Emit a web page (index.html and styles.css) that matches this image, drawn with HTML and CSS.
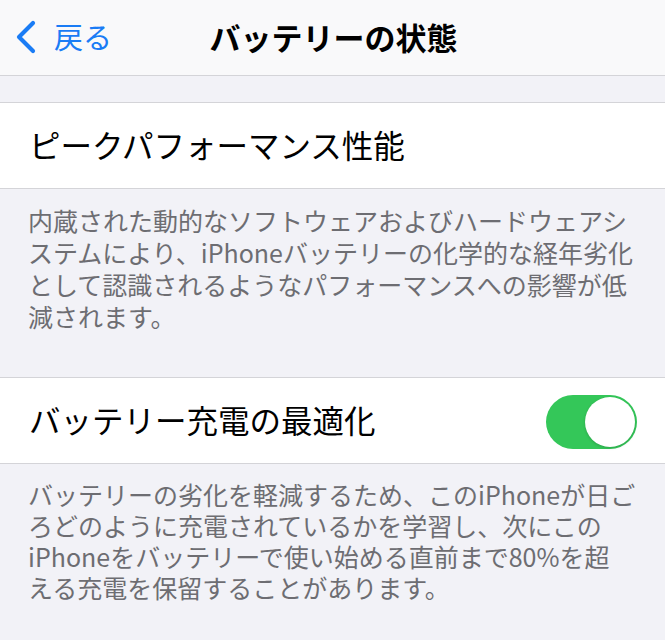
FILE: index.html
```html
<!DOCTYPE html>
<html lang="ja">
<head>
<meta charset="utf-8">
<link rel="stylesheet" href="styles.css">
</head>
<body>
<div class="page">
  <header class="nav">
    <div class="back">
      <svg class="chevron" width="24" height="34" viewBox="0 0 24 34">
        <path d="M19 3 L5 17 L19 31" fill="none" stroke="#1a7cf5" stroke-width="4.2" stroke-linecap="round" stroke-linejoin="round"/>
      </svg>
      <span class="back-text">戻る</span>
    </div>
    <div class="title">バッテリーの状態</div>
  </header>
  <div class="spacer"></div>
  <div class="row">
    <span class="row-label">ピークパフォーマンス性能</span>
  </div>
  <div class="footer footer-first">
    <div class="line">内蔵された動的なソフトウェアおよびハードウェアシ</div>
    <div class="line">ステムにより、iPhoneバッテリーの化学的な経年劣化</div>
    <div class="line">として認識されるようなパフォーマンスへの影響が低</div>
    <div class="line">減されます。</div>
  </div>
  <div class="row">
    <span class="row-label">バッテリー充電の最適化</span>
    <div class="toggle"><div class="knob"></div></div>
  </div>
  <div class="footer footer-second">
    <div class="line">バッテリーの劣化を軽減するため、このiPhoneが日ご</div>
    <div class="line">ろどのように充電されているかを学習し、次にこの</div>
    <div class="line">iPhoneをバッテリーで使い始める直前まで80%を超</div>
    <div class="line">える充電を保留することがあります。</div>
  </div>
</div>
</body>
</html>
```
FILE: styles.css
```css
* { box-sizing: border-box; }
html, body {
  margin: 0;
  padding: 0;
  background: #f2f2f7;
}
body {
  width: 665px;
  height: 640px;
  overflow: hidden;
  font-family: "Noto Sans CJK JP", "Noto Sans", sans-serif;
}
.page {
  display: flex;
  flex-direction: column;
}
.nav {
  height: 76px;
  background: #f9f9fa;
  border-bottom: 1px solid #d4d4d8;
  position: relative;
  display: flex;
  align-items: center;
  justify-content: center;
}
.back {
  position: absolute;
  left: 14px;
  top: 20px;
  display: flex;
  align-items: center;
  gap: 16px;
}
.chevron { display: block; }
.back-text {
  color: #1a7cf5;
  font-size: 29px;
  line-height: 34px;
  margin-top: -3px;
}
.title {
  font-size: 31px;
  font-weight: 700;
  color: #000;
  line-height: 40px;
  margin-top: -2px;
  margin-left: 2px;
}
.spacer {
  height: 26px;
}
.row {
  height: 87px;
  background: #fff;
  border-top: 1px solid #d4d4d8;
  border-bottom: 1px solid #d4d4d8;
  display: flex;
  align-items: center;
  justify-content: space-between;
  padding: 0 28px 0 29px;
}
.row-label {
  font-size: 31.5px;
  color: #000;
  line-height: 40px;
  margin-top: -3px;
}
.toggle {
  width: 91px;
  height: 54px;
  border-radius: 27px;
  background: #34c759;
  display: flex;
  justify-content: flex-end;
  align-items: center;
  padding: 2px;
  margin-top: 2px;
}
.knob {
  width: 50px;
  height: 50px;
  border-radius: 50%;
  background: #fff;
  box-shadow: 0 1px 3px rgba(0,0,0,0.18);
}
.footer {
  color: #6d6d72;
  font-size: 25px;
  padding: 15px 10px 0 28px;
  white-space: nowrap;
  display: flex;
  flex-direction: column;
}
.footer-first {
  height: 188px;
}
.footer-first .line {
  height: 32px;
  line-height: 32px;
}
.footer-second .line {
  height: 31px;
  line-height: 31px;
}
```
